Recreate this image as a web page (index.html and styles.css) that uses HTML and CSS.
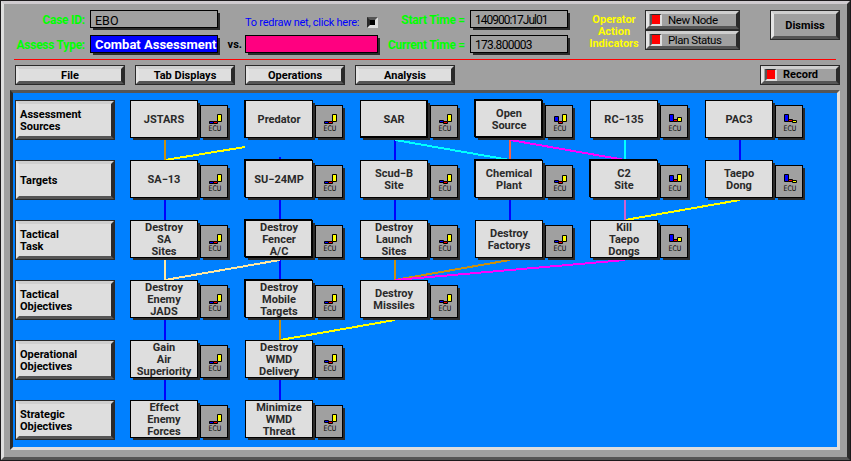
FILE: index.html
```html
<!DOCTYPE html>
<html lang="en">
<head>
<meta charset="utf-8">
<title>EBO Combat Assessment</title>
<link rel="stylesheet" href="styles.css">
</head>
<body>
<svg class="defs" width="0" height="0">
  <defs>
    <g id="ecu"><text x="8.6" y="25.6" font-size="7.6" textLength="12.8" lengthAdjust="spacingAndGlyphs">ECU</text></g>
    <g id="c-a"><path class="b" d="M9.5 16.5h4v2h-4z"/><path class="r" d="M13.5 16.5h4v2h-4z"/><path class="y" d="M17.5 9.5h4v7h-4z"/></g>
    <g id="c-b"><path class="b" d="M9.5 15.5h4v2h-4z"/><path class="r" d="M13.5 16.5h4v2h-4z"/><path class="y" d="M17.5 9.5h4v7h-4z"/></g>
    <g id="c-c"><path class="b" d="M9.5 11.5h4v5h-4z"/><path class="r" d="M13.5 16.5h4v2h-4z"/><path class="y" d="M17.5 9.5h4v7h-4z"/></g>
    <g id="c-d"><path class="b" d="M9.5 15.5h4v2h-4z"/><path class="r" d="M13.5 16.5h4v2h-4z"/><path class="y" d="M17.5 10.5h4v6h-4z"/></g>
    <g id="c-e"><path class="b" d="M9.5 9.5h4v7h-4z"/><path class="r" d="M13.5 14.5h4v2h-4z"/><path class="y" d="M17.5 12.5h4v4h-4z"/></g>
    <g id="c-f"><path class="b" d="M9.5 10.5h4v6h-4z"/><path class="r" d="M13.5 14.5h4v2h-4z"/><path class="y" d="M17.5 9.5h4v7h-4z"/></g>
    <g id="c-g"><path class="b" d="M9.5 9.5h4v7h-4z"/><path class="r" d="M13.5 14.5h4v2h-4z"/><path class="y" d="M17.5 15.5h4v2h-4z"/></g>
  </defs>
</svg>
<main class="window">
  <header class="top">
    <div class="fields">
      <span class="lbl">Case ID:</span><span class="field">EBO</span>
      <span></span><span class="redraw">To redraw net, click here:<i class="check"></i></span>
      <span class="lbl">Start Time =</span><span class="field num date">140900:17Jul01</span>
      <span class="lbl">Assess Type:</span><span class="field assess">Combat Assessment</span>
      <span class="vs">vs.</span><span class="field pink"></span>
      <span class="lbl">Current Time =</span><span class="field num">173.800003</span>
    </div>
    <div class="operator">Operator<br>Action<br>Indicators</div>
    <div class="indicators">
      <button class="btn gray ind"><i class="led"></i>New Node</button>
      <button class="btn gray ind"><i class="led"></i>Plan Status</button>
    </div>
    <button class="btn gray dismiss">Dismiss</button>
  </header>
  <hr class="rule">
  <nav class="menu">
    <button class="btn file">File</button>
    <button class="btn">Tab Displays</button>
    <button class="btn">Operations</button>
    <button class="btn">Analysis</button>
    <button class="btn gray record"><i class="led"></i>Record</button>
  </nav>
  <section class="canvas">
    <svg class="links" width="824" height="354" viewBox="13 93 824 354" shape-rendering="crispEdges">
      <path class="blue" d="M280 157V160M165 200V220M280 200V220M395 140V160M740 140V160M395 200V220M510 200V220M280 260V280M165 320V340M165 380V400M280 380V400"/>
      <path class="yellow" d="M165 160L245 147M740 200L625 220M395 320L280 340"/>
      <path class="gold" d="M165 140V160M395 260V280M510 260L395 280M280 320V340"/>
      <path class="cyan" d="M395 140L510 160M625 140V160"/>
      <path class="coral" d="M510 140V160"/>
      <path class="magenta" d="M510 140L625 160M625 260L395 280"/>
      <path class="orchid" d="M625 200V220"/>
      <path class="cream" d="M165 260V280M280 260L165 280"/>
    </svg>
    <div class="net">
      <button class="btn rowlabel">Assessment<br>Sources</button>
      <div class="node"><div class="box">JSTARS</div><svg class="ecu"><use href="#c-a"/><use href="#ecu"/></svg></div>
      <div class="node"><div class="box l">Predator</div><svg class="ecu"><use href="#c-a"/><use href="#ecu"/></svg></div>
      <div class="node"><div class="box r">SAR</div><svg class="ecu"><use href="#c-b"/><use href="#ecu"/></svg></div>
      <div class="node"><div class="box all">Open<br>Source</div><svg class="ecu"><use href="#c-c"/><use href="#ecu"/></svg></div>
      <div class="node"><div class="box">RC−135</div><svg class="ecu"><use href="#c-e"/><use href="#ecu"/></svg></div>
      <div class="node"><div class="box">PAC3</div><svg class="ecu"><use href="#c-g"/><use href="#ecu"/></svg></div>

      <button class="btn rowlabel">Targets</button>
      <div class="node"><div class="box">SA−13</div><svg class="ecu"><use href="#c-a"/><use href="#ecu"/></svg></div>
      <div class="node"><div class="box tl">SU−24MP</div><svg class="ecu"><use href="#c-a"/><use href="#ecu"/></svg></div>
      <div class="node"><div class="box">Scud−B<br>Site</div><svg class="ecu"><use href="#c-b"/><use href="#ecu"/></svg></div>
      <div class="node"><div class="box tl">Chemical<br>Plant</div><svg class="ecu"><use href="#c-d"/><use href="#ecu"/></svg></div>
      <div class="node"><div class="box tl">C2<br>Site</div><svg class="ecu"><use href="#c-f"/><use href="#ecu"/></svg></div>
      <div class="node"><div class="box">Taepo<br>Dong</div><svg class="ecu"><use href="#c-g"/><use href="#ecu"/></svg></div>

      <button class="btn rowlabel">Tactical<br>Task</button>
      <div class="node"><div class="box">Destroy<br>SA<br>Sites</div><svg class="ecu"><use href="#c-a"/><use href="#ecu"/></svg></div>
      <div class="node"><div class="box all">Destroy<br>Fencer<br>A/C</div><svg class="ecu"><use href="#c-a"/><use href="#ecu"/></svg></div>
      <div class="node"><div class="box">Destroy<br>Launch<br>Sites</div><svg class="ecu"><use href="#c-b"/><use href="#ecu"/></svg></div>
      <div class="node"><div class="box">Destroy<br>Factorys</div><svg class="ecu"><use href="#c-d"/><use href="#ecu"/></svg></div>
      <div class="node"><div class="box">Kill<br>Taepo<br>Dongs</div><svg class="ecu"><use href="#c-e"/><use href="#ecu"/></svg></div>

      <button class="btn rowlabel">Tactical<br>Objectives</button>
      <div class="node"><div class="box">Destroy<br>Enemy<br>JADS</div><svg class="ecu"><use href="#c-a"/><use href="#ecu"/></svg></div>
      <div class="node"><div class="box tl">Destroy<br>Mobile<br>Targets</div><svg class="ecu"><use href="#c-a"/><use href="#ecu"/></svg></div>
      <div class="node"><div class="box">Destroy<br>Missiles</div><svg class="ecu"><use href="#c-b"/><use href="#ecu"/></svg></div>

      <button class="btn rowlabel">Operational<br>Objectives</button>
      <div class="node"><div class="box">Gain<br>Air<br>Superiority</div><svg class="ecu"><use href="#c-a"/><use href="#ecu"/></svg></div>
      <div class="node"><div class="box">Destroy<br>WMD<br>Delivery</div><svg class="ecu"><use href="#c-b"/><use href="#ecu"/></svg></div>

      <button class="btn rowlabel">Strategic<br>Objectives</button>
      <div class="node"><div class="box">Effect<br>Enemy<br>Forces</div><svg class="ecu"><use href="#c-a"/><use href="#ecu"/></svg></div>
      <div class="node"><div class="box">Minimize<br>WMD<br>Threat</div><svg class="ecu"><use href="#c-b"/><use href="#ecu"/></svg></div>
    </div>
  </section>
</main>
</body>
</html>
```
FILE: styles.css
```css
* { box-sizing: border-box; }
body { margin: 0; background: #000; font: 700 11px/12px Roboto, "Liberation Sans", sans-serif; color: #000; }
.defs { position: absolute; }

.window {
  width: 851px; height: 461px; overflow: hidden;
  background: #a0a0a0;
  border: 4px solid; border-color: #cfcbcf #2a2a2a #555 #dedede;
  outline: 1px solid #1c1a1c; outline-offset: -1px;
  padding: 6px 7px 7px 6px;
}

/* header */
.top { display: flex; height: 49px; padding-left: 5px; }
.fields {
  display: grid; height: 43px;
  grid-template-columns: 75px 128px 27px 133px 92px 98px;
  grid-template-rows: 18px 18px; row-gap: 7px;
  line-height: 20px; white-space: nowrap;
}
.lbl { color: #0f0; text-align: right; padding-right: 5px; font-size: 12px; letter-spacing: -.25px; }
.field {
  border: 1px solid #000; background: #a0a0a0;
  box-shadow: 2.5px 2.5px 0 -.5px #2a2a2a;
  padding-left: 4px; font-size: 12.5px; font-weight: 400; line-height: 19px;
}
.num { padding-left: 4px; font-size: 12px; letter-spacing: -.7px; }
.date { letter-spacing: -1px; }
.assess { background: #00f; color: #fff; font-size: 13px; font-weight: 700; line-height: 18px; }
.pink { background: #ff0080; }
.vs { text-align: right; padding-right: 3px; }
.redraw {
  display: flex; justify-content: space-between; align-items: flex-end;
  color: #00f; font-weight: 400; font-size: 11px; line-height: 11px; letter-spacing: -.25px;
}
.check {
  width: 11px; height: 11px; background: #000;
  border: 3px solid; border-color: #555 #dedede #dedede #2a2a2a;
}
.operator { width: 77px; padding: 4px 0 0 15px; color: #ff0; text-align: center; }
.indicators { width: 95px; }

.btn {
  display: flex; align-items: center; justify-content: center;
  margin: 0; padding: 1px 0 0; font: inherit; color: #000; text-align: left;
  background: #dedede; border: 4px solid;
  border-color: #cfcfcf #2a2a2a #555 #e4e4e4;
  outline: 1px solid #2a2a2a; outline-offset: -1px; border-radius: 0;
}
.gray { background: #a0a0a0; }
.ind { width: 95px; height: 20px; padding-top: 0; justify-content: flex-start; font-weight: 400; font-size: 11.5px; letter-spacing: -.45px; }
.led {
  width: 12px; height: 12px; background: #f00; margin: 0 6px 0 1px; flex: none;
  border: 2px solid; border-color: #2a2a2a #dedede #dedede #555; border-top-width: 1px;
}
.dismiss { width: 70px; height: 30px; margin-left: 30px; }
.rule { height: 1px; border: 0; margin: 0 0 5px 4px; width: 822px; background: #f00; }

.menu { display: flex; gap: 10px; padding-left: 5px; height: 20px; }
.menu .btn { width: 100px; height: 20px; }
.menu .file { width: 110px; }
.menu .record { width: 80px; margin-left: auto; padding-top: 0; justify-content: flex-start; }

/* network canvas */
.canvas {
  position: relative; width: 830px; height: 360px; margin-top: 5px;
  background: #0080ff; border: 3px solid; border-color: #555 #dedede #dedede #2a2a2a;
}
.links { position: absolute; left: 0; top: 0; }
.links path { fill: none; stroke-width: 2; }
.blue { stroke: #00f; }
.yellow { stroke: #ff0; }
.gold { stroke: #c89010; }
.cyan { stroke: #0ff; }
.coral { stroke: #ff6040; }
.magenta { stroke: #f0f; }
.orchid { stroke: #d060d0; }
.cream { stroke: #ffe8a0; }
.net {
  position: relative; display: grid; padding: 7px 0 0 2px;
  grid-template-columns: 115px repeat(6, 115px); grid-auto-rows: 60px;
}
.rowlabel { grid-column: 1; width: 100px; height: 40px; justify-content: flex-start; padding: 2px 0 0 1px; }
.node { display: flex; gap: 2px; height: 38px; }
.box {
  width: 68px; height: 38px; border: 1px solid #000; background: #dedede;
  display: flex; align-items: center; justify-content: center; text-align: center;
  padding-top: 2px; overflow: hidden;
  color: #2a2a2a; white-space: nowrap;
  box-shadow: 2.5px 2.5px 0 -.5px #2a2a2a;
}
.box.l { box-shadow: -1px 0 0 #000, 2.5px 2.5px 0 -.5px #2a2a2a; }
.box.r { box-shadow: inset -1px -1px 0 #000, 2.5px 2.5px 0 -.5px #2a2a2a; }
.box.tl { box-shadow: -1px -1px 0 #000, 2.5px 2.5px 0 -.5px #2a2a2a; }
.box.all { box-shadow: -1px -1px 0 #000, inset -1px -1px 0 #000, 2.5px 2.5px 0 -.5px #2a2a2a; }
.ecu {
  width: 28px; height: 33px; margin-top: 5px; flex: none;
  background: #a0a0a0;
  box-shadow: inset 0 0 0 1px #000, 2.5px 2.5px 0 -.5px #2a2a2a;
  font: 400 7px "DejaVu Sans", sans-serif;
}
.b, .r, .y { stroke: #000; stroke-width: 1; }
.b { fill: #00f; }
path.r { fill: #f00; }
.y { fill: #ff0; }
```
